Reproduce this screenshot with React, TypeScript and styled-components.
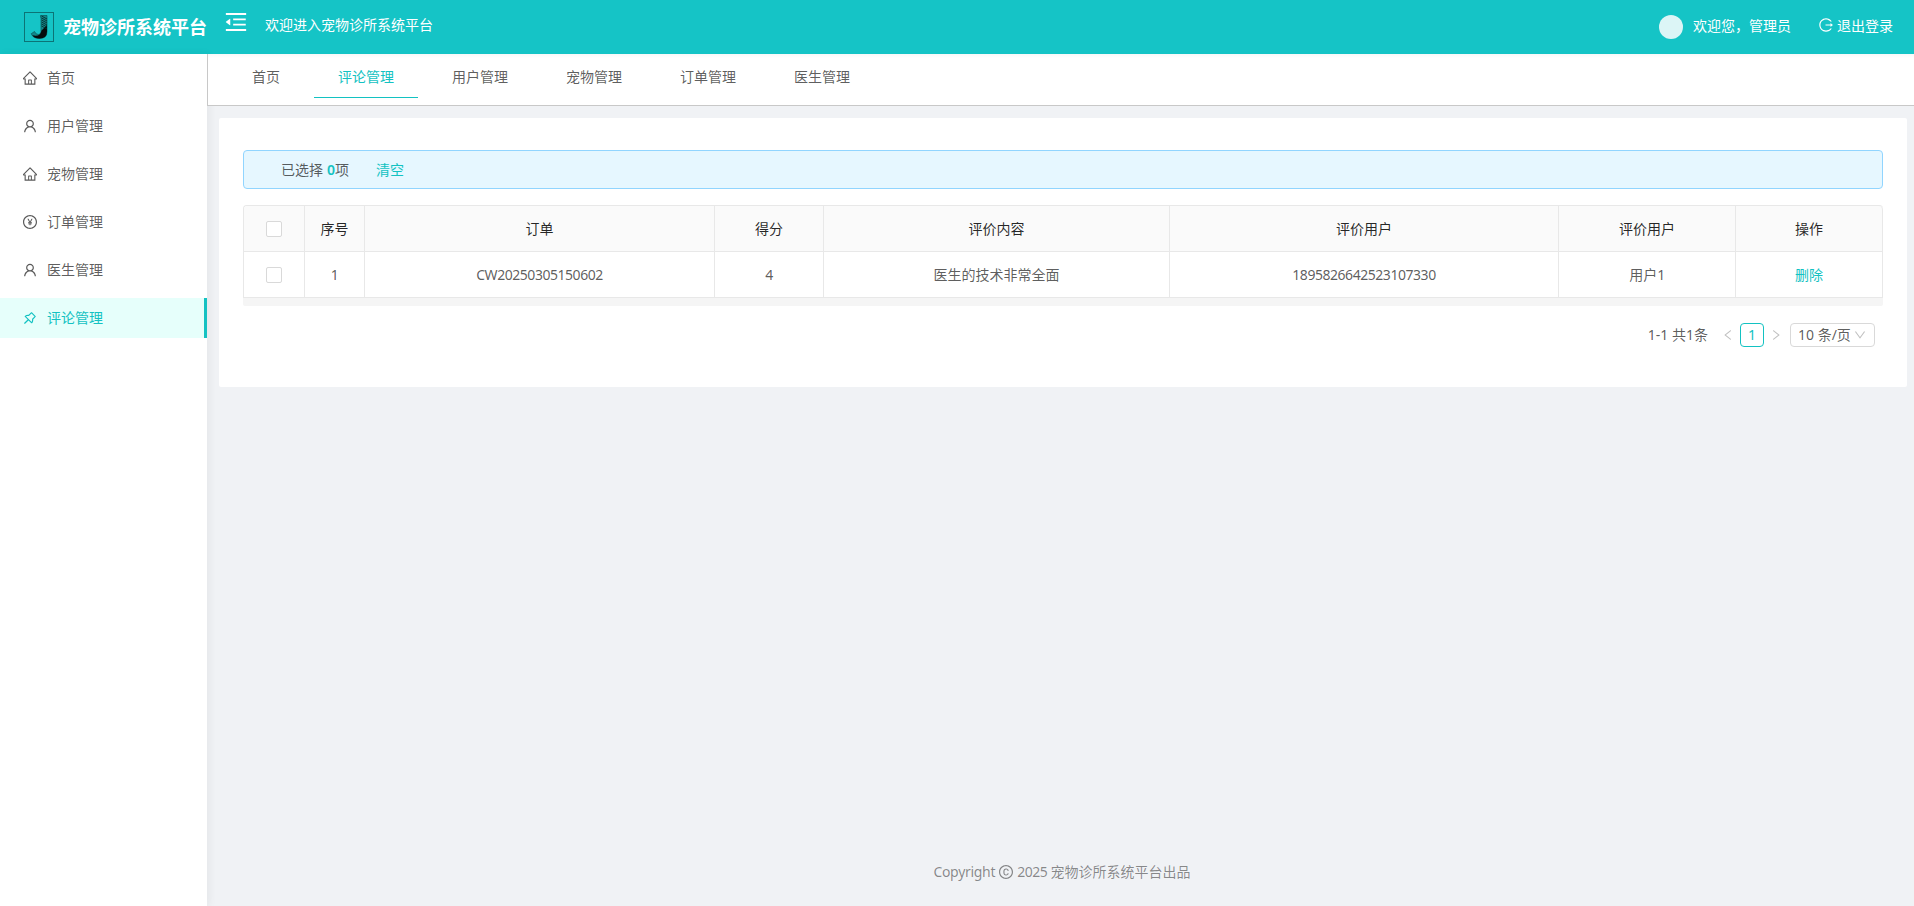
import React from 'react';
import styled, { createGlobalStyle } from 'styled-components';
import type { IconType } from 'react-icons';
import {
  AiOutlineHome,
  AiOutlineUser,
  AiOutlinePayCircle,
  AiOutlinePushpin,
  AiOutlineMenuFold,
  AiOutlineLogout,
  AiOutlineCopyright,
  AiOutlineLeft,
  AiOutlineRight,
  AiOutlineDown,
} from 'react-icons/ai';

const primary = '#13c2c2';
const line = '#e8e8e8';

const GlobalStyle = createGlobalStyle`
  *, *::before, *::after { box-sizing: border-box; }
  body {
    margin: 0;
    font-family: 'Noto Sans', 'Noto Sans CJK SC', sans-serif;
    font-size: 14px;
    line-height: 21px;
    color: rgba(0, 0, 0, 0.65);
    background: #f0f2f5;
  }
`;

const Page = styled.div`
  display: flex;
  flex-direction: column;
  height: 906px;
  overflow: hidden;
`;

const Header = styled.header`
  display: flex;
  align-items: center;
  height: 54px;
  flex: none;
  padding: 0 21px 0 24px;
  color: #fff;
  background: #15c4c6;
`;

const Logo = styled.svg`
  width: 30px;
  height: 30px;
  flex: none;
`;

const Brand = styled.h1`
  margin: -1px 0 0 9px;
  width: 144px;
  font-size: 18px;
  line-height: 26px;
  font-weight: 700;
  white-space: nowrap;
`;

const FoldIcon = styled(AiOutlineMenuFold)`
  margin: 0 0 10px 16px;
  width: 26px;
  height: 26px;
`;

const Welcome = styled.span`
  margin: -5px 0 0 16px;
`;

const UserArea = styled.div`
  display: flex;
  align-items: center;
  margin-left: auto;
`;

const Avatar = styled.span`
  width: 24px;
  height: 24px;
  border-radius: 50%;
  background: #dcf5f6;
`;

const UserName = styled.span`
  margin: -4px 28px 0 10px;
`;

const Logout = styled.a`
  display: flex;
  align-items: center;
  gap: 4px;
  margin-top: -4px;
`;

const Body = styled.div`
  display: flex;
  flex: 1;
  min-height: 0;
`;

const Sider = styled.nav`
  width: 207px;
  flex: none;
  padding-top: 4px;
  background: #fff;
  box-shadow: 2px 0 8px rgba(29, 35, 41, 0.06);
  z-index: 1;
`;

const MenuItem = styled.a<{ $active?: boolean }>`
  display: flex;
  align-items: center;
  height: 40px;
  margin-bottom: 8px;
  padding-left: 23px;
  gap: 10px;
  color: ${(p) => (p.$active ? primary : 'inherit')};
  background: ${(p) => (p.$active ? '#e6fffb' : 'transparent')};
  border-right: 3px solid ${(p) => (p.$active ? primary : 'transparent')};
`;

const MenuLabel = styled.span`
  margin-top: -2px;
`;

const Main = styled.main`
  display: flex;
  flex-direction: column;
  flex: 1;
  min-width: 0;
`;

const Tabs = styled.div`
  display: flex;
  height: 52px;
  flex: none;
  padding-left: 20px;
  background: linear-gradient(#f7f8f8, #fff 4px);
  border-left: 1px solid #c8c8c8;
  border-bottom: 1px solid #c8c8c8;
  position: relative;
  z-index: 1;
`;

const Tab = styled.a<{ $active?: boolean }>`
  height: 44px;
  padding: 12px 24px 0;
  margin-right: 10px;
  color: ${(p) => (p.$active ? primary : 'inherit')};
  border-bottom: 1px solid ${(p) => (p.$active ? primary : 'transparent')};
`;

const Card = styled.section`
  margin: 12px 7px 0 12px;
  padding: 32px 24px 40px;
  height: 269px;
  background: #fff;
  border-radius: 2px;
`;

const Notice = styled.div`
  display: flex;
  align-items: center;
  height: 39px;
  padding-left: 37px;
  background: #e6f7ff;
  border: 1px solid #91d5ff;
  border-radius: 4px;
`;

const Count = styled.b`
  margin-left: 4px;
  color: ${primary};
  font-weight: 600;
`;

const Link = styled.a<{ $left?: number }>`
  margin-left: ${(p) => p.$left ?? 0}px;
  color: ${primary};
`;

const Latin = styled.span`
  letter-spacing: -0.46px;
`;

const TableFrame = styled.div`
  margin-top: 16px;
  padding-bottom: 8px;
  background: #f5f5f5;
  border-radius: 4px 4px 2px 2px;
`;

const Table = styled.table`
  width: 100%;
  table-layout: fixed;
  border-collapse: separate;
  border-spacing: 0;
  border-top: 1px solid ${line};
  border-left: 1px solid ${line};
  border-radius: 4px 4px 0 0;
  background: #fff;
  overflow: hidden;
`;

const cell = `
  height: 46px;
  padding: 0;
  text-align: center;
  border-right: 1px solid ${line};
  border-bottom: 1px solid ${line};
`;

const HeadCell = styled.th`
  ${cell}
  background: #fafafa;
  color: rgba(0, 0, 0, 0.85);
  font-weight: 400;
  &:last-child { border-top-right-radius: 4px; }
`;

const Cell = styled.td`
  ${cell}
`;

const Checkbox = styled.span`
  display: block;
  width: 16px;
  height: 16px;
  margin: 0 auto;
  background: #fff;
  border: 1px solid #d9d9d9;
  border-radius: 2px;
`;

const Pagination = styled.div`
  display: flex;
  align-items: center;
  justify-content: flex-end;
  height: 24px;
  margin: 17px 8px 0 0;
`;

const Arrow = styled.span`
  display: flex;
  justify-content: center;
  width: 24px;
  color: rgba(0, 0, 0, 0.25);
`;

const Total = styled.span`
  margin: -2px 8px 0 0;
`;

const PageNumber = styled.span`
  width: 24px;
  height: 24px;
  line-height: 21px;
  text-align: center;
  color: ${primary};
  border: 1px solid ${primary};
  border-radius: 4px;
`;

const SizeSelect = styled.span`
  display: flex;
  align-items: center;
  justify-content: space-between;
  width: 85px;
  height: 24px;
  margin-left: 2px;
  padding: 0 8px 1px 7px;
  border: 1px solid #d9d9d9;
  border-radius: 4px;
  svg { color: rgba(0, 0, 0, 0.25); }
`;

const Footer = styled.footer`
  display: flex;
  align-items: center;
  justify-content: center;
  gap: 4px;
  margin: auto 0 24px;
  padding-left: 3px;
  color: rgba(0, 0, 0, 0.45);
`;

const Copyright = styled.span`
  letter-spacing: -0.3px;
`;

const Glyph = ({ icon: Icon, size = 14 }: { icon: IconType; size?: number }) => (
  <Icon size={size} viewBox="64 64 896 896" />
);

const menu = [
  { label: '首页', icon: AiOutlineHome },
  { label: '用户管理', icon: AiOutlineUser },
  { label: '宠物管理', icon: AiOutlineHome },
  { label: '订单管理', icon: AiOutlinePayCircle },
  { label: '医生管理', icon: AiOutlineUser },
  { label: '评论管理', icon: AiOutlinePushpin },
];
const tabs = ['首页', '评论管理', '用户管理', '宠物管理', '订单管理', '医生管理'];
const current = '评论管理';

const columns = [
  { title: '序号', width: 60 },
  { title: '订单', width: 350 },
  { title: '得分', width: 109 },
  { title: '评价内容', width: 346 },
  { title: '评价用户', width: 389 },
  { title: '评价用户', width: 177 },
  { title: '操作', width: 147 },
];

export default function App() {
  return (
    <Page>
      <GlobalStyle />
      <Header>
        <Logo viewBox="0 0 30 30">
          <rect x="0.5" y="0.5" width="29" height="29" fill="none" stroke="#0c7476" />
          <path
            d="M16.5 3.5h6.5v16q0 7-7.5 7-6.5 0-8.3-4.8l3.3-2.2q1.2 3 3.8 3 2.7 0 2.7-3V6l-.5-1z"
            fill="#12888a"
            stroke="#0a4a4c"
            strokeWidth="0.6"
          />
          <path d="M23 13v6.5q0 7-7.5 7-5 0-7.2-3.2 8 2 9.2-4.8z" fill="#050c0d" />
          <path d="M17.5 4l5.5 3m-5.5-1l5.5 3m-5.5-1l5.5 3m-5.5-1l5.5 3m-5.5-1l5.5 3m-5.5-1l5.5 3" stroke="#072c2e" strokeWidth="0.9" />
        </Logo>
        <Brand>宠物诊所系统平台</Brand>
        <FoldIcon />
        <Welcome>欢迎进入宠物诊所系统平台</Welcome>
        <UserArea>
          <Avatar />
          <UserName>欢迎您，管理员</UserName>
          <Logout>
            <Glyph icon={AiOutlineLogout} />
            退出登录
          </Logout>
        </UserArea>
      </Header>
      <Body>
        <Sider>
          {menu.map(({ label, icon }) => (
            <MenuItem key={label} $active={label === current}>
              <Glyph icon={icon} />
              <MenuLabel>{label}</MenuLabel>
            </MenuItem>
          ))}
        </Sider>
        <Main>
          <Tabs>
            {tabs.map((label) => (
              <Tab key={label} $active={label === current}>
                {label}
              </Tab>
            ))}
          </Tabs>
          <Card>
            <Notice>
              已选择<Count>0</Count>项<Link $left={27}>清空</Link>
            </Notice>
            <TableFrame>
              <Table>
                <colgroup>
                  <col style={{ width: 61 }} />
                  {columns.map((c, i) => (
                    <col key={i} style={{ width: c.width }} />
                  ))}
                </colgroup>
                <thead>
                  <tr>
                    <HeadCell>
                      <Checkbox />
                    </HeadCell>
                    {columns.map((c, i) => (
                      <HeadCell key={i}>{c.title}</HeadCell>
                    ))}
                  </tr>
                </thead>
                <tbody>
                  <tr>
                    <Cell>
                      <Checkbox />
                    </Cell>
                    <Cell><Latin>1</Latin></Cell>
                    <Cell><Latin>CW20250305150602</Latin></Cell>
                    <Cell><Latin>4</Latin></Cell>
                    <Cell>医生的技术非常全面</Cell>
                    <Cell><Latin>1895826642523107330</Latin></Cell>
                    <Cell>用户<Latin>1</Latin></Cell>
                    <Cell><Link>删除</Link></Cell>
                  </tr>
                </tbody>
              </Table>
            </TableFrame>
            <Pagination>
              <Total>1-1 共1条</Total>
              <Arrow><Glyph icon={AiOutlineLeft} size={12} /></Arrow>
              <PageNumber>1</PageNumber>
              <Arrow><Glyph icon={AiOutlineRight} size={12} /></Arrow>
              <SizeSelect>
                <span>10 条/页</span>
                <Glyph icon={AiOutlineDown} size={12} />
              </SizeSelect>
            </Pagination>
          </Card>
          <Footer>
            <Copyright>Copyright</Copyright>
            <Glyph icon={AiOutlineCopyright} />
            <span><Latin>2025 </Latin>宠物诊所系统平台出品</span>
          </Footer>
        </Main>
      </Body>
    </Page>
  );
}
